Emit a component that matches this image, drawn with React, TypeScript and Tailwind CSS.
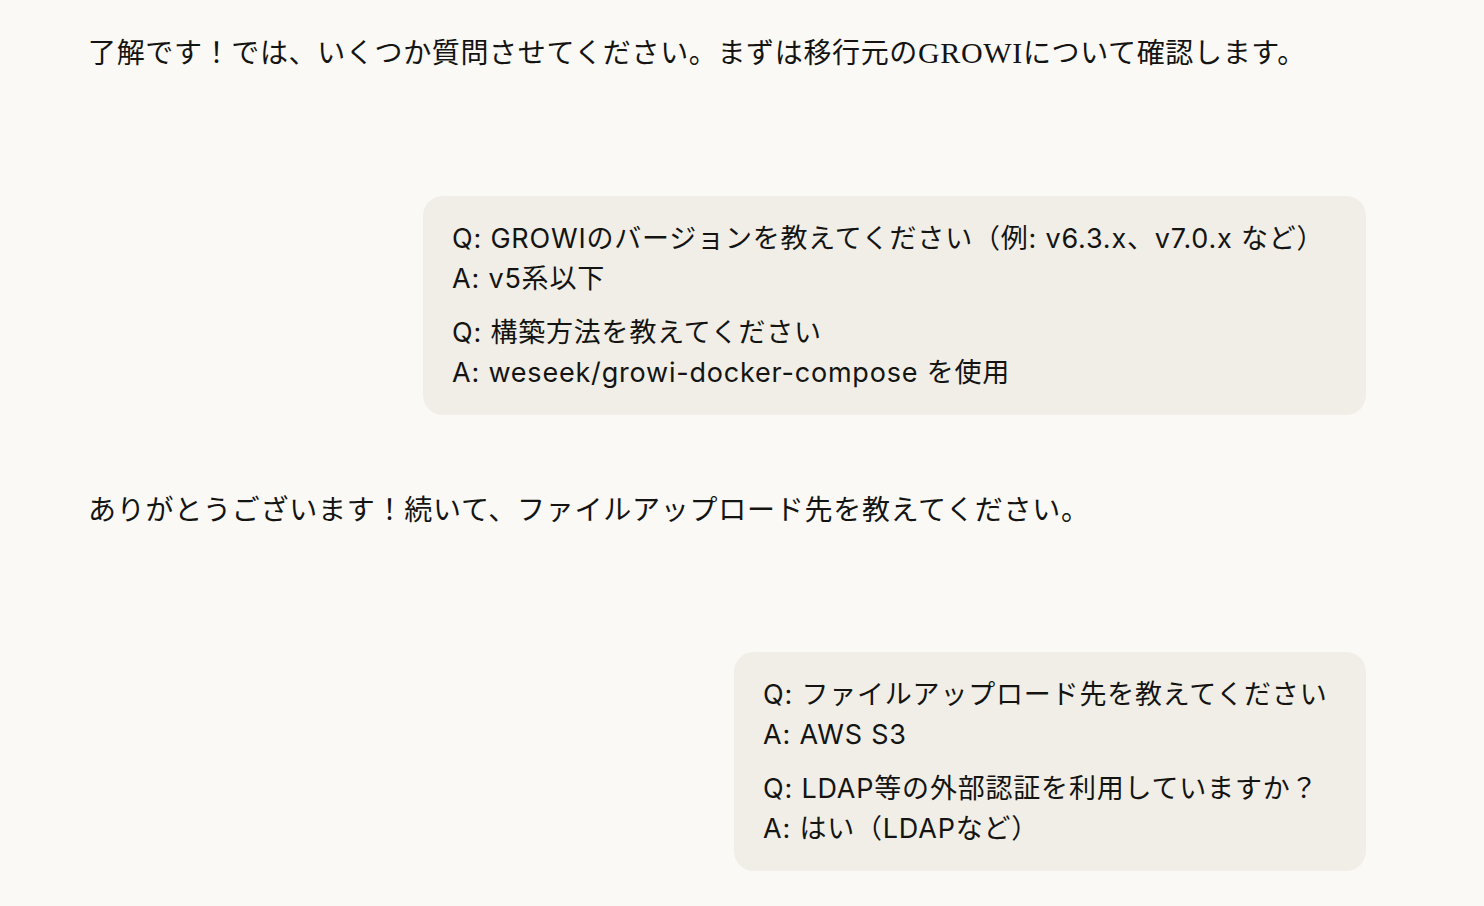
import React from "react";

const serif = { fontFamily: '"Liberation Serif", "Noto Sans CJK JP", serif' };
const sans = { fontFamily: 'Inter, "Noto Sans CJK JP", sans-serif' };

function QA({ q, a }: { q: string; a: string }) {
  return (
    <div className="flex flex-col">
      <div className="leading-[40px] whitespace-nowrap">Q: {q}</div>
      <div className="leading-[40px] whitespace-nowrap">A: {a}</div>
    </div>
  );
}

function Bubble({ width, items }: { width: string; items: { q: string; a: string }[] }) {
  return (
    <div className="flex justify-end">
      <div
        className={`${width} rounded-[20px] bg-[#f0eee6] px-[29px] pt-[23px] pb-[22px] text-[27px] tracking-[0.8px] text-[#141413] flex flex-col gap-[14px]`}
        style={sans}
      >
        {items.map((it, i) => (
          <QA key={i} q={it.q} a={it.a} />
        ))}
      </div>
    </div>
  );
}

export default function App() {
  return (
    <div className="min-h-[906px] w-full bg-[#faf9f5] pl-[88px] pr-[118px] pt-[31px] overflow-hidden">
      <p className="text-[28px] leading-[44px] tracking-[0.65px] text-[#141413] whitespace-nowrap" style={serif}>
        了解です！では、いくつか質問させてください。まずは移行元の<span className="text-[30px]">GROWI</span>について確認します。
      </p>
      <div className="mt-[120px]">
        <Bubble
          width="w-[943px]"
          items={[
            { q: "GROWIのバージョンを教えてください（例: v6.3.x、v7.0.x など）", a: "v5系以下" },
            { q: "構築方法を教えてください", a: "weseek/growi-docker-compose を使用" },
          ]}
        />
      </div>
      <p className="mt-[74px] text-[28px] leading-[44px] tracking-[0.75px] text-[#141413] whitespace-nowrap" style={serif}>
        ありがとうございます！続いて、ファイルアップロード先を教えてください。
      </p>
      <div className="mt-[119px]">
        <Bubble
          width="w-[632px]"
          items={[
            { q: "ファイルアップロード先を教えてください", a: "AWS S3" },
            { q: "LDAP等の外部認証を利用していますか？", a: "はい（LDAPなど）" },
          ]}
        />
      </div>
    </div>
  );
}
